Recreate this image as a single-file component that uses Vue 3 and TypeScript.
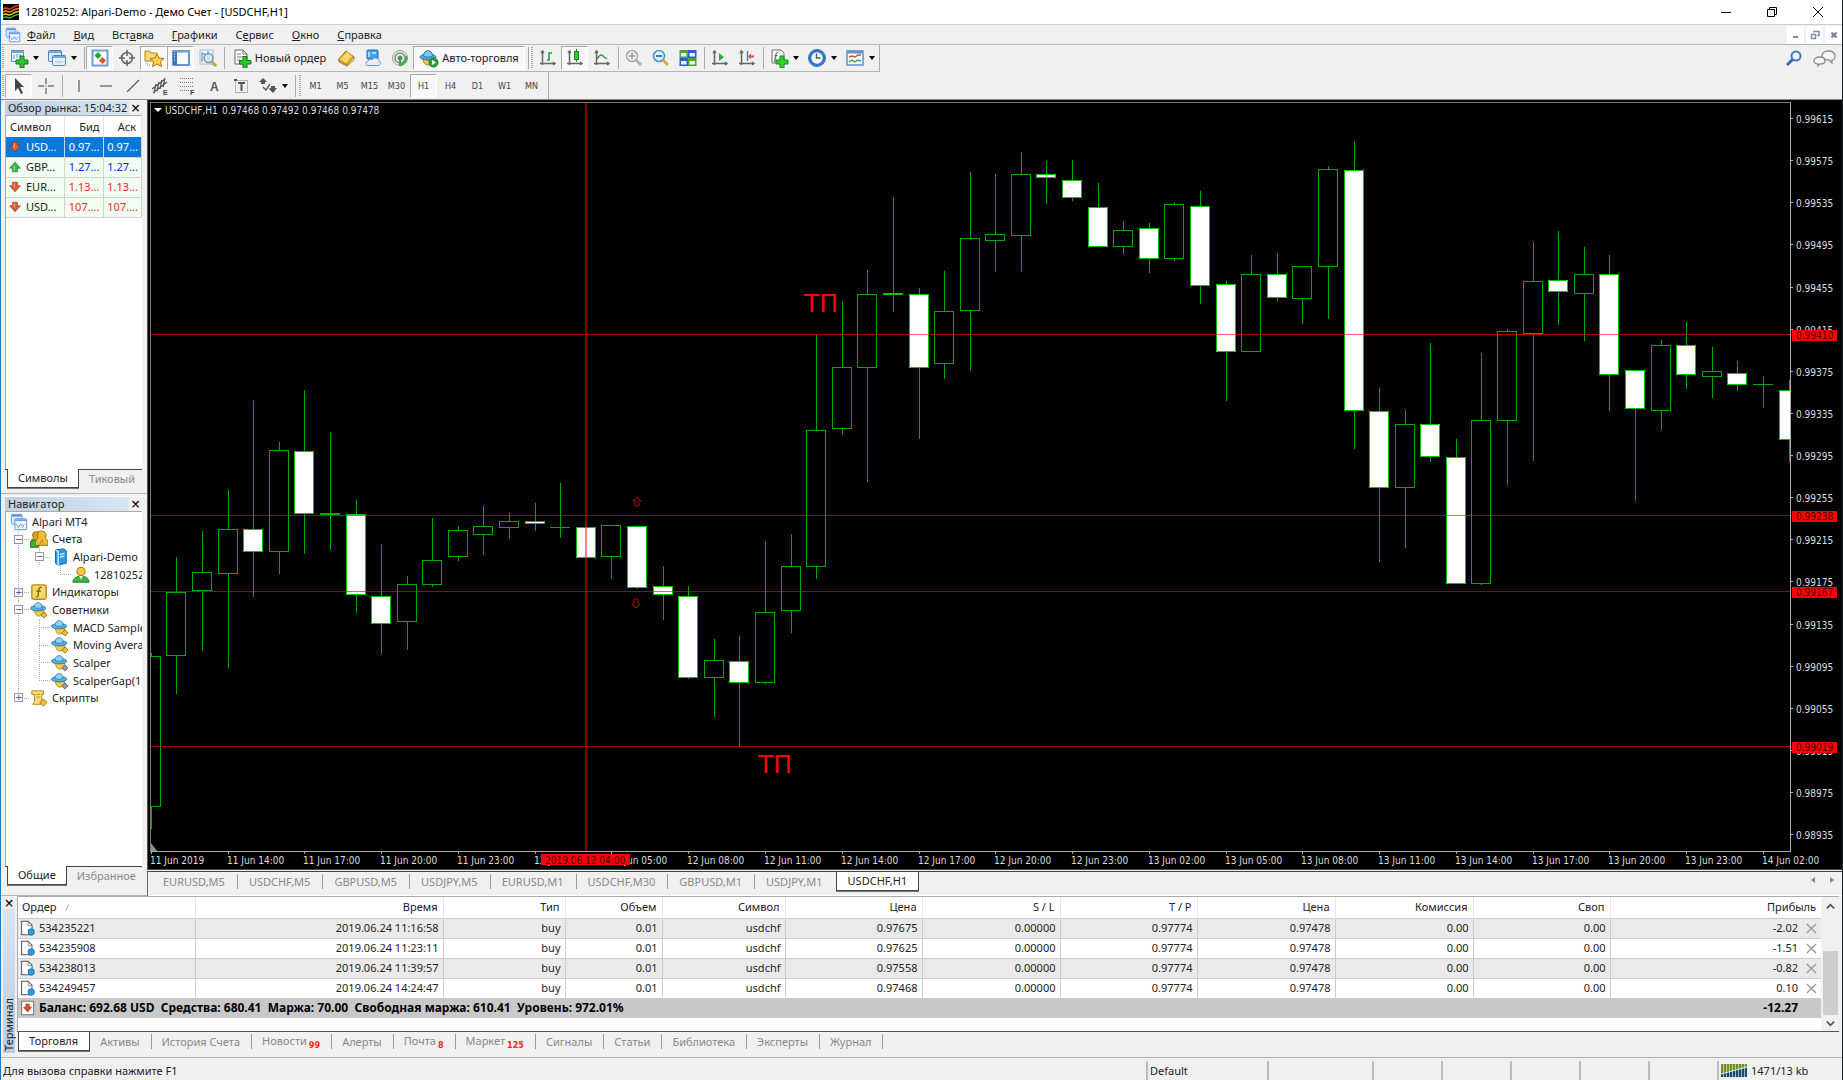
<script setup lang="ts">
interface Tool { icon?: string; text?: string; label?: string; kind?: 'sep' | 'grip'; arrow?: boolean; on?: boolean; wide?: string }

const icons: Record<string, string> = {
  newchart: '<rect x="2.5" y="2.5" width="12" height="11" fill="#e8f1fb" stroke="#5f8fc4"/><path d="M2 4h13" stroke="#7aa5d6" stroke-width="2"/><path d="M5 11V7M8 10V6M11 9V6" stroke="#6d98c8"/><path d="M11 8h4v4h4v4h-4v4h-4v-4H7v-4h4z" fill="#2fc42f" stroke="#0d7d14"/>',
  profiles: '<rect x="1.5" y="2.5" width="13" height="11" rx="1" fill="#dbe8f8" stroke="#4f81bd"/><path d="M2 4h12" stroke="#7ba6d9" stroke-width="2"/><rect x="5.500" y="7.500" width="13" height="10" rx="1" fill="#e8f1fb" stroke="#4f81bd"/><path d="M6 9h12" stroke="#7ba6d9" stroke-width="2"/><path d="M8 14h8" stroke="#9dbbe0"/>',
  market: '<rect x="2.500" y="2.500" width="15" height="15" fill="#fff" stroke="#6f9fd8" stroke-width="2"/><path d="M8 4l3.500 3.500L8 11 4.500 7.500z" fill="#1fa838"/><path d="M12.500 9l3.500 3.500-3.500 3.500L9 12.500z" fill="#e2552c"/>',
  target: '<g fill="none" stroke="#666" stroke-width="1.600"><circle cx="10" cy="10" r="5.500"/><path d="M10 2v6M10 12v6M2 10h6M12 10h6"/></g>',
  star: '<path d="M1 3h5l1 2h6v8H1z" fill="#f8d978" stroke="#b98a1f"/><path d="M3 13v4h4" fill="none" stroke="#888" stroke-dasharray="1 1"/><path d="M13 6l2 4 5 .6-3.500 3 1 5L13 16l-4.500 2.600 1-5-3.500-3 5-.6z" fill="#fbd045" stroke="#a8780f"/>',
  navpanel: '<rect x="2" y="3" width="16" height="14" fill="#f8fbff" stroke="#3c72b8" stroke-width="1.500"/><path d="M2 4h16" stroke="#7fabe0" stroke-width="1.500"/><rect x="2" y="4" width="4" height="13" fill="#3e74b8"/><path d="M3 6h1M3 9h1M3 12h1" stroke="#fff"/>',
  tester: '<rect x="2" y="2" width="13" height="14" fill="#f1f6fc" stroke="#9fb7d0"/><path d="M4 4v10M7 5v4M10 3v9M4 6h2" stroke="#4b89c8"/><circle cx="10.500" cy="10" r="4.500" fill="#cfe6f7" fill-opacity=".8" stroke="#7b98b3" stroke-width="1.500"/><path d="M14 14l4 4" stroke="#d5a021" stroke-width="3"/>',
  neworder: '<path d="M3 2h8l4 4v10H3z" fill="#fff" stroke="#666"/><path d="M11 2v4h4M5 6h4M5 9h6M5 12h3" fill="none" stroke="#777"/><path d="M11 8.500h4v4h4v3.500h-4v4h-4v-4H7.500v-3.500H11z" fill="#2fc42f" stroke="#0d7d14"/>',
  book: '<path d="M2 12L10 3l8 6-7 9z" fill="#e6ab28" stroke="#9c6c0e"/><path d="M4 11l7-7 5 4-6 7z" fill="#f8d666"/><path d="M3 13l8 4 7-8v3l-7 6-8-4z" fill="#fff3c8" stroke="#9c6c0e" stroke-width=".8"/>',
  vps: '<rect x="4" y="2" width="11" height="9" rx="1" fill="#40a4e8" stroke="#1e6fb5"/><path d="M6 4v5M9 5h4" stroke="#c9ecff" stroke-width="1.500"/><path d="M4 17.500h12a3 3 0 0 0 0-5 4 4 0 0 0-7-1 3 3 0 0 0-4 1.500 2.500 2.500 0 0 0-1 4.500z" fill="#e6eef8" stroke="#6d93c5"/>',
  radio: '<g fill="none"><circle cx="10" cy="10" r="7.500" stroke="#999"/><circle cx="10" cy="10" r="5" stroke="#888" stroke-width="1.500"/><path d="M10 17a7 7 0 0 0 6-9" stroke="#4fae54" stroke-width="2.500"/></g><circle cx="10" cy="10" r="2.500" fill="#4b9a55"/><path d="M10 10v8" stroke="#3fa34a" stroke-width="2"/>',
  auto: '<path d="M4 11c0 8 10 8 10 0z" fill="#f6cb4a" stroke="#a9821c"/><ellipse cx="9" cy="9" rx="8" ry="3" fill="#5aa9dc" stroke="#2a75ad"/><path d="M4.500 8c0-7 9-7 9 0-2 1.500-7 1.500-9 0z" fill="#83c8ec" stroke="#2a75ad"/><circle cx="14.500" cy="14.500" r="4.500" fill="#27a73a" stroke="#0f7420"/><path d="M13 12l4 2.500-4 2.500z" fill="#fff"/>',
  bars: '<path d="M4.500 3v14M2 15.500h15M3 5l1.500-2L6 5M15 14l2 1.500-2 1.500" fill="none" stroke="#666" stroke-width="1.500"/><path d="M9 12h2V5h3M11 5v7" fill="none" stroke="#2d9a3a" stroke-width="1.600"/>',
  candles: '<path d="M4.500 3v14M2 15.500h15M3 5l1.500-2L6 5M15 14l2 1.500-2 1.500" fill="none" stroke="#666" stroke-width="1.500"/><path d="M11.500 1v13" stroke="#16841f"/><rect x="9.500" y="3.500" width="4" height="8" fill="#2fc43a" stroke="#16841f"/>',
  linechart: '<path d="M4.500 3v14M2 15.500h15M3 5l1.500-2L6 5M15 14l2 1.500-2 1.500" fill="none" stroke="#666" stroke-width="1.500"/><path d="M5 11c3-5 5-5 7-2l3 2" fill="none" stroke="#3d9a4c" stroke-width="1.500"/>',
  zoomin: '<circle cx="8" cy="8" r="5.500" fill="#eee" stroke="#aaa" stroke-width="1.600"/><path d="M5 8h6M8 5v6" stroke="#999" stroke-width="1.600"/><path d="M12 12l5 5" stroke="#b5b5b5" stroke-width="3"/>',
  zoomout: '<circle cx="8" cy="8" r="5.500" fill="#d8effc" stroke="#4b94d0" stroke-width="1.600"/><path d="M5 8h6" stroke="#2c6fb0" stroke-width="1.800"/><path d="M12 12l5 5" stroke="#dcae33" stroke-width="3"/>',
  tiles: '<path d="M1.500 2H10v8H1.500z" fill="#4fa32b"/><path d="M10 2h8.500v8H10z" fill="#2b5fc8"/><path d="M1.500 10H10v8H1.500z" fill="#2b5fc8"/><path d="M10 10h8.500v8H10z" fill="#4fa32b"/><path d="M3 5h5.500v3.500H3zM11.500 5H17v3.500h-5.500zM3 13h5.500v3.500H3zM11.500 13H17v3.500h-5.500z" fill="#e9f4fb"/>',
  scroll: '<path d="M4.500 3v14M2 15.500h15M3 5l1.500-2L6 5M15 14l2 1.500-2 1.500" fill="none" stroke="#666" stroke-width="1.500"/><path d="M9 5l5 4-5 4z" fill="#25b038"/>',
  shift: '<path d="M4.500 3v14M2 15.500h15M3 5l1.500-2L6 5M15 14l2 1.500-2 1.500" fill="none" stroke="#666" stroke-width="1.500"/><path d="M10.500 3v10" stroke="#4782be" stroke-width="1.500"/><path d="M11 8.500l3-3v2h3v2h-3v2z" fill="#d85a2a"/>',
  indicators: '<path d="M3 2h9l3 3v10H3z" fill="#f8f8f8" stroke="#777"/><text x="5" y="12" font-family="Liberation Serif" font-size="11" font-style="italic" fill="#333">f</text><path d="M11 8h4v4h4v4h-4v4h-4v-4H7v-4h4z" fill="#2fd42f" stroke="#0d8d14"/>',
  clock: '<circle cx="10" cy="10" r="7" fill="#f4f8fc" stroke="#2a78d0" stroke-width="2.500"/><circle cx="10" cy="10" r="8.500" fill="none" stroke="#174f96" stroke-width=".8"/><path d="M9.500 5.500V10h4" fill="none" stroke="#555" stroke-width="1.300"/>',
  template: '<rect x="2" y="3" width="16" height="14" fill="#f5faff" stroke="#5d93cc" stroke-width="1.500"/><path d="M2 4h16" stroke="#5d93cc" stroke-width="3"/><path d="M4 9l3-1 3 1 3-2 3 0" fill="none" stroke="#c4552e" stroke-width="1.400"/><path d="M4 14l3-2 3 2 3-2 3 1" fill="none" stroke="#3ba24a" stroke-width="1.400"/>',
  cursor: '<path d="M6 2l9 9h-4l3 6-2 1-3-6-3 3z" fill="#444"/>',
  cross: '<path d="M10 2v6M10 12v6M2 10h6M12 10h6" stroke="#777" stroke-width="1.500"/><path d="M10 9.500v1" stroke="#777" stroke-width="1.500"/>',
  vline: '<path d="M10 4v12" stroke="#777" stroke-width="1.500"/>',
  hline: '<path d="M4 10h12" stroke="#777" stroke-width="1.500"/>',
  diag: '<path d="M4 16L16 4" stroke="#666" stroke-width="1.500"/>',
  channel: '<g stroke="#555" stroke-width="1.200" fill="none"><path d="M2 13L15 3M3 17L17 6M6 8l-2 9M9 6l-2 9M12 4l-2 9M15 2l-2 9"/></g><text x="13" y="19" font-family="Liberation Sans" font-weight="bold" font-size="7" fill="#444">E</text>',
  fibo: '<g stroke="#777" stroke-dasharray="1 1"><path d="M3 2.500h14M3 6.500h14M3 10.500h14M3 14.500h9"/></g><text x="13" y="19" font-family="Liberation Sans" font-weight="bold" font-size="7" fill="#444">F</text>',
  textA: '<text x="6" y="15" font-family="Liberation Sans" font-weight="bold" font-size="12" fill="#555">A</text>',
  textT: '<rect x="4.500" y="4.500" width="12" height="12" fill="none" stroke="#777" stroke-dasharray="1 1"/><path d="M7 7h7M10.500 7v8" stroke="#555" stroke-width="2"/><path d="M3 3h3v2H3z" fill="#555"/>',
  shapes: '<path d="M1 6l4-4 4 4H7v2H3V6z" fill="#555"/><path d="M5 11l3 3 4-6" fill="none" stroke="#666" stroke-width="1.500"/><path d="M10 13l3-1v-2h4v2h2l-4 5-4-4z" fill="#555"/>',
  down: '<path d="M6 2h8v6h5l-9 10L1 8h5z" fill="#e25a32" stroke="#8f2a10"/><path d="M8 4h2v7H8z" fill="#f6a58a"/>',
  up: '<path d="M6 18h8v-6h5L10 2 1 12h5z" fill="#35b54a" stroke="#146f24"/><path d="M8 16h2V7l-2 2z" fill="#9be0a6"/>',
  app: '<rect x="1.500" y="1.500" width="12" height="11" rx="1" fill="#dceafb" stroke="#5b94dc"/><path d="M2 3h11" stroke="#5b94dc" stroke-width="2"/><rect x="5.500" y="6.500" width="13" height="12" rx="1" fill="#f2f8ff" stroke="#4887d8"/><path d="M6 8h12" stroke="#6ba4e6" stroke-width="2"/><path d="M7 12l2 4 3-4 2 4 2-4" fill="none" stroke="#5b94dc"/>',
  people: '<path d="M1 19c-1-7 1-9 3-10-2-3-1-7 2-7h4v17z" fill="#d9a325" stroke="#92660f"/><path d="M0 19c0-7 2-8 5-8s4 3 4 8z" fill="#36b33a" stroke="#14731b"/><path d="M6 17c0-5 1-7 3-8-2-4 0-8 4-8s6 4 4 8c2 1 3 3 3 8z" fill="#f0bd3a" stroke="#92660f"/><path d="M13 10l-2 6M13 10l2 6" stroke="#b98a1f"/>',
  server: '<path d="M5 2l9-1 3 2v14l-9 2-3-2z" fill="#2d97e8" stroke="#145f9e"/><path d="M5 2l3 2v15M10 7l5-1M10 10l5-1" fill="none" stroke="#d4efff" stroke-width="1.500"/>',
  person: '<path d="M1 18c0-9 18-9 18 0z" fill="#3cba40" stroke="#14731b"/><path d="M8 11l2 4 2-4z" fill="#fff"/><circle cx="10" cy="6" r="4.500" fill="#f5c842" stroke="#92660f"/>',
  func: '<rect x="2" y="2" width="16" height="16" rx="2" fill="#f5d768" stroke="#b08a24" stroke-width="1.500"/><path d="M13 5c-4-1-3 3-4 9-.5 2-2 1-2 1M7 9h5" fill="none" stroke="#7a5b0d" stroke-width="1.400"/>',
  expert: '<path d="M5 10c0 9 10 9 10 0z" fill="#f6cb4a" stroke="#a9821c"/><ellipse cx="9" cy="8" rx="8.500" ry="3" fill="#5aafe0" stroke="#2a75ad"/><path d="M4.500 7c0-7 9-7 9 0-2 1.500-7 1.500-9 0z" fill="#8fd0f0" stroke="#2a75ad" stroke-width=".8"/><path d="M15.500 12l3.500 3.500-3.500 3.500-3.500-3.500z" fill="#edbd3a" stroke="#95700f"/>',
  expertoff: '<path d="M5 10c0 9 10 9 10 0z" fill="#f6cb4a" stroke="#a9821c"/><ellipse cx="9" cy="8" rx="8.500" ry="3" fill="#5aafe0" stroke="#2a75ad"/><path d="M4.500 7c0-7 9-7 9 0-2 1.500-7 1.500-9 0z" fill="#8fd0f0" stroke="#2a75ad" stroke-width=".8"/><path d="M15.500 12l3.500 3.500-3.500 3.500-3.500-3.500z" fill="#999" stroke="#666"/>',
  script: '<path d="M2 2h13v4h-2v11H3l2-3V6H2z" fill="#f7dc74" stroke="#a9821c"/><path d="M7 6h4M7 9h4" stroke="#a9821c"/><path d="M15 11l4 4-4 4-4-4z" fill="#edbd3a" stroke="#95700f"/>',
  order: '<path d="M2 1.500h8l5 5v12H2z" fill="#fff" stroke="#555" stroke-width="1.300"/><path d="M10 2v5h5" fill="none" stroke="#777"/><circle cx="14" cy="15" r="4" fill="#2c9fe0" stroke="#1668a5"/>',
  balance: '<path d="M2 1.500h15v17H2z" fill="#fff" stroke="#777" stroke-width="1.300"/><path d="M7.500 5h4v4h3l-5 6-5-6h3z" fill="#dc4f28" stroke="#8f2a10" stroke-width=".8"/>',
}

const bar1: Tool[] = [
  { kind: 'grip' }, { icon: 'newchart', label: 'Новый график', arrow: true }, { icon: 'profiles', label: 'Профили', arrow: true }, { kind: 'sep' },
  { icon: 'market', label: 'Обзор рынка', on: true }, { icon: 'target', label: 'Окно данных' }, { icon: 'star', label: 'Навигатор', on: true },
  { icon: 'navpanel', label: 'Терминал', on: true }, { icon: 'tester', label: 'Тестер стратегий' }, { kind: 'sep' },
  { icon: 'neworder', text: 'Новый ордер', wide: 'order' }, { icon: 'book', label: 'MetaEditor' }, { icon: 'vps', label: 'Виртуальный хостинг' }, { icon: 'radio', label: 'Сигналы' },
  { icon: 'auto', text: 'Авто-торговля', on: true, wide: 'auto' }, { kind: 'sep' }, { kind: 'grip' },
  { icon: 'bars', label: 'Бары' }, { icon: 'candles', label: 'Свечи', on: true }, { icon: 'linechart', label: 'Линия' }, { kind: 'sep' },
  { icon: 'zoomin', label: 'Увеличить' }, { icon: 'zoomout', label: 'Уменьшить' }, { icon: 'tiles', label: 'Мозаика' }, { kind: 'sep' },
  { icon: 'scroll', label: 'Автопрокрутка' }, { icon: 'shift', label: 'Сдвиг графика' }, { kind: 'sep' },
  { icon: 'indicators', label: 'Индикаторы', arrow: true }, { icon: 'clock', label: 'Периоды', arrow: true }, { icon: 'template', label: 'Шаблоны', arrow: true },
]
const bar2: Tool[] = [
  { kind: 'grip' }, { icon: 'cursor', label: 'Курсор', on: true }, { icon: 'cross', label: 'Перекрестие' }, { kind: 'sep' },
  { icon: 'vline', label: 'Вертикальная линия' }, { icon: 'hline', label: 'Горизонтальная линия' }, { icon: 'diag', label: 'Трендовая линия' },
  { icon: 'channel', label: 'Канал' }, { icon: 'fibo', label: 'Фибоначчи' }, { icon: 'textA', label: 'Текст' }, { icon: 'textT', label: 'Метка' },
  { icon: 'shapes', label: 'Стрелки', arrow: true }, { kind: 'sep' }, { kind: 'grip' },
  ...['M1', 'M5', 'M15', 'M30', 'H1', 'H4', 'D1', 'W1', 'MN'].map((t) => ({ text: t, on: t === 'H1' })),
]
const menu = [['', 'Ф', 'айл'], ['', 'В', 'ид'], ['Вст', 'а', 'вка'], ['', 'Г', 'рафики'], ['С', 'е', 'рвис'], ['', 'О', 'кно'], ['', 'С', 'правка']]

const quotes = [
  { s: 'USD...', b: '0.97...', a: '0.97...', dir: 'down', cls: 'sel' },
  { s: 'GBP...', b: '1.27...', a: '1.27...', dir: 'up', cls: 'gain' },
  { s: 'EUR...', b: '1.13...', a: '1.13...', dir: 'down', cls: 'loss' },
  { s: 'USD...', b: '107....', a: '107....', dir: 'down', cls: 'loss' },
]
const tree = [
  { d: 0, icon: 'app', t: 'Alpari MT4' },
  { d: 1, box: '−', icon: 'people', t: 'Счета' },
  { d: 2, box: '−', icon: 'server', t: 'Alpari-Demo' },
  { d: 3, icon: 'person', t: '12810252' },
  { d: 1, box: '+', icon: 'func', t: 'Индикаторы' },
  { d: 1, box: '−', icon: 'expert', t: 'Советники' },
  { d: 2, icon: 'expert', t: 'MACD Sample' },
  { d: 2, icon: 'expert', t: 'Moving Average' },
  { d: 2, icon: 'expertoff', t: 'Scalper' },
  { d: 2, icon: 'expertoff', t: 'ScalperGap(1)' },
  { d: 1, box: '+', icon: 'script', t: 'Скрипты' },
]

// Each bar: high, body top, body bottom, low, falling flag
const raw: number[][] = [
  [653, 656, 806, 829, 0], [557, 592, 655, 694, 0], [531, 572, 590, 651, 0], [490, 529, 573, 668, 0], [401, 529, 551, 597, 1],
  [442, 450, 551, 574, 0], [390, 451, 513, 554, 1], [433, 513, 514, 550, 0], [500, 514, 594, 613, 1], [545, 596, 623, 654, 1],
  [576, 584, 621, 650, 0], [518, 560, 584, 587, 0], [526, 530, 556, 561, 0], [506, 526, 534, 555, 0], [513, 521, 527, 539, 0],
  [503, 521, 523, 531, 1], [483, 527, 527, 538, 0], [527, 527, 557, 557, 1], [525, 525, 556, 579, 0], [526, 526, 587, 589, 1],
  [566, 586, 594, 620, 1], [586, 596, 677, 679, 1], [639, 660, 677, 717, 0], [636, 661, 682, 747, 1], [541, 612, 682, 684, 0],
  [534, 566, 610, 633, 0], [335, 430, 566, 579, 0], [301, 367, 428, 435, 0], [270, 294, 367, 482, 0], [197, 293, 294, 312, 1],
  [288, 294, 367, 439, 1], [271, 311, 363, 379, 0], [172, 238, 310, 371, 0], [174, 234, 240, 272, 0], [152, 174, 235, 271, 0],
  [161, 174, 177, 204, 1], [160, 180, 197, 201, 1], [183, 207, 246, 247, 1], [221, 230, 246, 254, 0], [223, 228, 258, 273, 1],
  [202, 204, 258, 261, 0], [191, 206, 285, 304, 1], [281, 284, 351, 401, 1], [255, 274, 351, 351, 0], [253, 274, 297, 301, 1],
  [266, 266, 298, 324, 0], [166, 169, 266, 319, 0], [141, 170, 410, 449, 1], [388, 411, 487, 562, 1], [410, 424, 487, 548, 0],
  [343, 424, 456, 462, 1], [439, 457, 583, 583, 1], [353, 420, 583, 585, 0], [329, 331, 420, 485, 0], [242, 281, 333, 461, 0],
  [231, 280, 291, 325, 1], [247, 274, 293, 341, 0], [255, 274, 374, 411, 1], [370, 370, 408, 501, 1], [340, 345, 410, 430, 0],
  [322, 345, 374, 389, 1], [347, 371, 376, 398, 0], [361, 373, 384, 391, 1], [376, 384, 384, 408, 0], [380, 390, 439, 462, 1],
]
const step = 25.59
const barX = (i: number) => Math.floor(i * step + 0.3)
const top = 103
const candles = raw.map(([h, t, b, l, f], i) => ({ x: barX(i), h: h - top, t: t - top, b: b - top, l: l - top, f: !!f }))
const levels = [
  { y: 334, p: '0.99410' }, { y: 515, p: '0.99238' }, { y: 591, p: '0.99167' }, { y: 746, p: '0.99019' },
].map((v) => ({ ...v, y: v.y - top }))
const prices = Array.from({ length: 18 }, (_, i) => ({ y: Math.round(17 + i * 42.13), p: (0.99615 - i * 0.0004).toFixed(5) }))
const times = Array.from({ length: 22 }, (_, i) => {
  const hour = 11 + i * 3
  const day = 11 + Math.floor(hour / 24)
  return { x: barX(i * 3), t: i === 0 ? '11 Jun 2019' : `${day} Jun ${String(hour % 24).padStart(2, '0')}:00` }
})
const chartTabs = ['EURUSD,M5', 'USDCHF,M5', 'GBPUSD,M5', 'USDJPY,M5', 'EURUSD,M1', 'USDCHF,M30', 'GBPUSD,M1', 'USDJPY,M1', 'USDCHF,H1']
const cols = ['Ордер', 'Время', 'Тип', 'Объем', 'Символ', 'Цена', 'S / L', 'T / P', 'Цена', 'Комиссия', 'Своп', 'Прибыль']
const orders = [
  ['534235221', '2019.06.24 11:16:58', '0.97675', '-2.02'],
  ['534235908', '2019.06.24 11:23:11', '0.97625', '-1.51'],
  ['534238013', '2019.06.24 11:39:57', '0.97558', '-0.82'],
  ['534249457', '2019.06.24 14:24:47', '0.97468', '0.10'],
].map(([id, time, price, profit]) => ({ id, profit, cells: [time, 'buy', '0.01', 'usdchf', price, '0.00000', '0.97774', '0.97478', '0.00', '0.00'] }))
const termTabs = [
  { t: 'Торговля' }, { t: 'Активы' }, { t: 'История Счета' }, { t: 'Новости', n: '99' }, { t: 'Алерты' }, { t: 'Почта', n: '8' }, { t: 'Маркет', n: '125' },
  { t: 'Сигналы' }, { t: 'Статьи' }, { t: 'Библиотека' }, { t: 'Эксперты' }, { t: 'Журнал' },
]
</script>

<template>
  <div class="win">
    <header class="title">
      <svg class="logo" viewBox="0 0 16 16"><rect width="16" height="16" fill="#000" /><g fill="none" stroke-width="1.500"><path d="M0 5c4-3 5 2 9-1s4-1 7-3" stroke="#e33" /><path d="M0 8c4-3 5 2 9-1s4-1 7-3" stroke="#f80" /><path d="M0 11c4-3 5 2 9-1s4-1 7-3" stroke="#dd2" /><path d="M0 14c4-3 5 2 9-1s4-1 7-3" stroke="#3b3" /></g></svg>
      <h1>12810252: Alpari-Demo - Демо Счет - [USDCHF,H1]</h1>
      <div class="winbtns">
        <button aria-label="Свернуть"><svg viewBox="0 0 12 12"><path d="M1 6.500h10" stroke="#000" /></svg></button>
        <button aria-label="Восстановить"><svg viewBox="0 0 12 12"><path d="M1.500 3.500h7v7h-7zM3.500 3.500v-2h7v7h-2" fill="none" stroke="#000" /></svg></button>
        <button aria-label="Закрыть"><svg viewBox="0 0 12 12"><path d="M1 1l10 10M11 1L1 11" stroke="#000" /></svg></button>
      </div>
    </header>

    <nav class="menu">
      <svg class="ic16" viewBox="0 0 20 20" v-html="icons.app"></svg>
      <button v-for="m in menu" :key="m.join('')">{{ m[0] }}<u>{{ m[1] }}</u>{{ m[2] }}</button>
      <div class="mdi">
        <button aria-label="Свернуть график"><svg viewBox="0 0 12 12"><path d="M3 8h5" stroke="#7d8fa5" stroke-width="2" /></svg></button>
        <button aria-label="Восстановить график"><svg viewBox="0 0 12 12"><path d="M2.500 5.500h4v4h-4zM2 5.500h5M5 3.500V2.500h5v4H8" fill="none" stroke="#7d8fa5" stroke-width="1.500" /></svg></button>
        <button aria-label="Закрыть график"><svg viewBox="0 0 12 12"><path d="M3.500 3.500l5 5M8.500 3.500l-5 5" stroke="#6d8096" stroke-width="2" /></svg></button>
      </div>
    </nav>

    <div class="bars">
      <div v-for="(bar, bi) in [bar1, bar2]" :key="bi" class="bar">
        <div class="tools" :class="{ second: bi === 1 }">
          <template v-for="(t, i) in bar" :key="i">
            <span v-if="t.kind" :class="t.kind"></span>
            <button v-else class="tool" :class="[t.wide, { on: t.on, drop: t.arrow, tf: !t.icon }]" :aria-label="t.label">
              <svg v-if="t.icon" class="ic" viewBox="0 0 20 20" v-html="icons[t.icon]"></svg>
              <span v-if="t.text">{{ t.text }}</span>
              <i v-if="t.arrow" class="caret"></i>
            </button>
          </template>
        </div>
        <div v-if="bi === 0" class="right">
          <button aria-label="Поиск"><svg class="ic" viewBox="0 0 20 20"><circle cx="12" cy="7" r="4.500" fill="#eef4ff" stroke="#4a78cf" stroke-width="2" /><path d="M9 10l-6 6" stroke="#3a66bd" stroke-width="3" /></svg></button>
          <button aria-label="Сообщения"><svg class="chat" viewBox="0 0 24 20"><g fill="#f4f4f8" stroke="#8d8d94" stroke-width="1.300"><path d="M15 2c5 0 7 2 7 5s-2 4-3 4v3l-3-3c-5 0-7-2-7-4 0-3 2-5 6-5z" /><path d="M7 8c4 0 5 2 5 4s-2 3-5 3l-2 2v-2c-3 0-4-2-4-3 0-2 2-4 6-4z" /></g></svg></button>
        </div>
      </div>
    </div>

    <main class="mid">
      <aside class="side">
        <section class="dock watch">
          <h2><span>Обзор рынка: 15:04:32</span><button aria-label="Закрыть обзор рынка">×</button></h2>
          <div class="body">
            <table class="quotes">
              <thead><tr><th>Символ</th><th>Бид</th><th>Аск</th></tr></thead>
              <tbody>
                <tr v-for="(q, i) in quotes" :key="i" :class="q.cls">
                  <td><div class="sym"><svg class="ic12" viewBox="0 0 20 20" v-html="icons[q.dir]"></svg>{{ q.s }}</div></td><td>{{ q.b }}</td><td>{{ q.a }}</td>
                </tr>
              </tbody>
            </table>
          </div>
          <div class="tabs"><button class="act">Символы</button><button>Тиковый</button></div>
        </section>
        <section class="dock nav">
          <h2><span>Навигатор</span><button aria-label="Закрыть навигатор">×</button></h2>
          <div class="body">
            <ul class="tree">
              <li v-for="(n, i) in tree" :key="i" :class="'d' + n.d">
                <span v-if="n.d" class="stem"><b v-if="n.box">{{ n.box }}</b></span>
                <svg class="ic18" viewBox="0 0 20 20" v-html="icons[n.icon]"></svg><span>{{ n.t }}</span>
              </li>
            </ul>
          </div>
          <div class="tabs"><button class="act">Общие</button><button>Избранное</button></div>
        </section>
      </aside>

      <section class="work">
        <div class="chart">
          <svg class="plot" role="img" aria-label="USDCHF,H1">
            <g v-for="(c, i) in candles" :key="i" shape-rendering="crispEdges">
              <rect class="wick" :x="c.x" :y="c.h" width="1" :height="c.l - c.h" />
              <rect v-if="c.b > c.t" :class="c.f ? 'fall' : 'rise'" :x="c.x - 9.500" :y="c.t + .5" width="19" :height="c.b - c.t" />
              <rect v-else class="wick" :x="c.x - 10" :y="c.t" width="20" height="1" />
            </g>
            <rect v-for="l in levels" :key="l.p" class="level" x="0" :y="l.y" width="100%" height="1" />
            <rect class="vert" x="434" y="0" width="2" height="100%" />
            <path class="mark" d="M486 394l4 4h-2v5h-4v-5h-2z" /><path class="mark" d="M485 505l-4-4h2v-5h4v5h2z" />
            <text class="tp" x="653" y="209">ТП</text><text class="tp" x="607" y="670">ТП</text>
            <path d="M3 5h8l-4 4z" fill="#fff" />
            <text class="lbl" x="14" y="11">USDCHF,H1</text><text class="lbl" x="71" y="11">0.97468 0.97492 0.97468 0.97478</text>
            <path class="corner" d="M0 740v8h6z" />
          </svg>
          <svg class="paxis">
            <g v-for="p in prices" :key="p.p"><rect x="0" :y="p.y - 1" width="2" height="1" fill="#aaa" /><text class="lbl" x="5" :y="p.y + 4">{{ p.p }}</text></g>
            <g v-for="l in levels" :key="l.p"><rect x="1" :y="l.y - 3" width="45" height="11" fill="#f00" /><text class="hot" x="5" :y="l.y + 6">{{ l.p }}</text></g>
          </svg>
          <svg class="taxis">
            <g v-for="t in times" :key="t.t"><rect :x="t.x" y="0" width="1" height="2" fill="#aaa" /><text class="lbl" :x="t.x - 1" y="12">{{ t.t }}</text></g>
            <rect x="390" y="2" width="89" height="11" fill="#f00" /><text class="hot" x="394" y="12">2019.06.12 04:00</text>
          </svg>
        </div>
        <div class="ctabs">
          <button v-for="t in chartTabs" :key="t" :class="{ act: t === 'USDCHF,H1' }">{{ t }}</button>
          <span class="arrows"><i class="al"></i><i class="ar"></i></span>
        </div>
      </section>
    </main>

    <section class="term">
      <div class="strip"><button aria-label="Закрыть терминал">×</button><span>Терминал</span></div>
      <div class="tbody">
        <div class="grid">
          <table class="orders">
            <colgroup><col v-for="(c, i) in cols" :key="i" :class="'c' + i" /></colgroup>
            <thead><tr><th v-for="(c, i) in cols" :key="i">{{ c }}<i v-if="i === 0" class="sort">∕</i></th></tr></thead>
            <tbody>
              <tr v-for="o in orders" :key="o.id">
                <td><div class="sym"><svg class="ic16" viewBox="0 0 20 20" v-html="icons.order"></svg>{{ o.id }}</div></td>
                <td v-for="(c, i) in o.cells" :key="i">{{ c }}</td>
                <td><div class="profit">{{ o.profit }}<button aria-label="Закрыть ордер"><svg viewBox="0 0 12 12"><path d="M1 1l10 10M11 1L1 11" stroke="#999" stroke-width="1.500" /></svg></button></div></td>
              </tr>
            </tbody>
            <tfoot>
              <tr>
                <td colspan="11"><div class="sym"><svg class="ic16" viewBox="0 0 20 20" v-html="icons.balance"></svg>Баланс: 692.68 USD&nbsp; Средства: 680.41&nbsp; Маржа: 70.00&nbsp; Свободная маржа: 610.41&nbsp; Уровень: 972.01%</div></td>
                <td><div class="profit total">-12.27</div></td>
              </tr>
            </tfoot>
          </table>
          <div class="scroll"><svg viewBox="0 0 10 10"><path d="M1 7l4-4 4 4" /></svg><i></i><svg viewBox="0 0 10 10"><path d="M1 3l4 4 4-4" /></svg></div>
        </div>
        <div class="ttabs"><button v-for="(t, i) in termTabs" :key="t.t" :class="{ act: i === 0 }">{{ t.t }}<sub v-if="t.n">{{ t.n }}</sub></button></div>
      </div>
    </section>

    <footer class="status">
      <span class="help">Для вызова справки нажмите F1</span>
      <span class="s1">Default</span><span class="s2"></span><span class="s3"></span><span class="s3"></span><span class="s3"></span><span class="s3"></span><span class="s3"></span>
      <span class="net"><svg viewBox="0 0 26 13"><rect width="26" height="13" fill="#6f8d18" /><path d="M0 13v-3L26 3v10z" fill="#154a72" /><path d="M0 10L26 3" stroke="#e8eef0" /><path d="M2.500 0v13M5.500 0v13M8.500 0v13M11.500 0v13M14.500 0v13M17.500 0v13M20.500 0v13M23.500 0v13" stroke="#dfe5e0" stroke-width=".7" /></svg>1471/13 kb</span>
    </footer>
  </div>
</template>

<style>
body { margin: 0; background: #f0f0f0; }
</style>

<style scoped>
.win { display: flex; flex-direction: column; min-height: 100vh; box-sizing: border-box; border-left: 1px solid #1979ca; border-right: 1px solid #17222e; background: #f0f0f0; color: #222; font: 11px/16px "Noto Sans", "Open Sans", sans-serif; overflow: hidden; }
.win * { box-sizing: border-box; }
button { font: inherit; color: inherit; background: none; border: 0; padding: 0; margin: 0; }
h1, h2 { margin: 0; font: inherit; }
svg { display: block; flex: none; }
.ic { width: 20px; height: 20px; }
.ic18 { width: 18px; height: 18px; }
.ic16 { width: 16px; height: 16px; }
.ic12 { width: 12px; height: 12px; }

.title { display: flex; align-items: center; height: 24px; background: #fff; color: #000; padding: 0 1px 0 2px; }
.logo { width: 16px; height: 16px; }
.title h1 { margin-left: 6px; }
.winbtns { margin-left: auto; display: flex; }
.winbtns button { width: 46px; height: 24px; display: grid; place-items: center; }
.winbtns svg { width: 12px; height: 12px; }

.menu { display: flex; align-items: center; height: 21px; border-top: 1px solid #ccc; border-bottom: 1px solid #b4b4b4; padding-left: 4px; }
.menu > button { padding: 0 9px; height: 18px; }
.menu > .ic16 { margin-right: -3px; }
.mdi { margin-left: auto; display: flex; gap: 2px; }
.mdi button { width: 17px; height: 18px; background: #fff; display: grid; place-items: center; }
.mdi svg { width: 12px; height: 12px; }

.bars { border-bottom: 1px solid #888; }
.bar { display: flex; justify-content: space-between; height: 27px; }
.tools { display: flex; align-items: center; border-right: 1px solid #aaa; border-bottom: 1px solid #b4b4b4; }
.tools.second { border-bottom: 0; padding-right: 3px; }
.tool { width: 27px; height: 24px; display: flex; align-items: center; justify-content: center; border: 1px solid transparent; }
.tool.on { background: #f8f8f8; border-color: #aaa #fff #fff #aaa; }
.tool.drop { width: 38px; gap: 4px; }
.tool.order { width: 106px; gap: 3px; }
.tool.auto { width: 112px; gap: 3px; }
.tool.tf { font: 9px/16px "DejaVu Sans Condensed", "DejaVu Sans", sans-serif; color: #444; }
.caret { border: 3px solid transparent; border-top: 4px solid #000; border-bottom: 0; }
.sep { width: 4px; height: 22px; border-right: 1px solid #aaa; margin-right: 1px; }
.second .sep { margin-right: 2px; }
.grip { width: 4px; height: 22px; background: repeating-linear-gradient(#aaa 0 1px, #f0f0f0 1px 2px); border-left: 1px solid #f0f0f0; border-right: 1px solid #f0f0f0; }
.right { display: flex; align-items: center; gap: 9px; padding-right: 5px; }
.chat { width: 24px; height: 20px; }

.mid { flex: 1; display: flex; min-height: 0; }
.side { width: 146px; flex: none; display: flex; flex-direction: column; padding: 1px 5px 0 4px; border-bottom: 1px solid #b4b4b4; }
.dock { display: flex; flex-direction: column; min-height: 0; }
.watch { height: 392px; }
.nav { flex: 1; margin-top: 4px; padding-bottom: 5px; position: relative; }
.nav::before { content: ""; position: absolute; left: -4px; right: -5px; top: -4px; height: 2px; border-top: 1px solid #b4b4b4; border-bottom: 1px solid #fff; }
.dock h2 { display: flex; height: 14px; line-height: 14px; align-items: center; justify-content: space-between; }
.dock h2 span { flex: 1; padding-left: 3px; background: linear-gradient(90deg, #bfcfdf, #d8e6f4); white-space: nowrap; overflow: hidden; }
.dock h2 button, .strip button { width: 13px; line-height: 12px; font-size: 16px; color: #000; text-align: center; }
.body { flex: 1; background: #fff; border: 1px solid #aaa; border-width: 1px 0 0 1px; overflow: hidden; }
.tabs { display: flex; height: 24px; padding-left: 2px; overflow: hidden; background: linear-gradient(#444 0 1px, transparent 1px); align-items: flex-start; }
.tabs button { height: 19px; padding: 0 10px; color: #888; white-space: nowrap; }
.tabs .act { background: #fff; color: #222; border: 1px solid #444; border-top: 0; box-shadow: 0 1px #777; }

table { border-collapse: collapse; table-layout: fixed; }
th { font-weight: normal; }
.quotes { width: 136px; }
.quotes th { height: 21px; padding: 0 5px 0 0; text-align: right; border-right: 1px solid #e4e4e4; }
.quotes th:first-child { width: 58px; text-align: left; padding-left: 4px; }
.quotes th:nth-child(2) { width: 39px; padding-right: 3px; }
.quotes td { height: 20px; padding: 0 3px 0 0; text-align: right; background: #f1fdf0; border-right: 1px solid #d2d2d2; border-bottom: 1px solid #d2d2d2; }
.sym { display: flex; align-items: center; }
.quotes .sym { gap: 5px; padding-left: 3px; }
.quotes .sel td { background: #0a78d7; color: #fff; }
.gain td:nth-child(n+2) { color: #1a1aff; }
.loss td:nth-child(n+2) { color: #f22; }

.tree { list-style: none; margin: 0; padding: 1px 0 0; height: 195px; display: grid; grid-auto-rows: minmax(0, 1fr); }
.tree li { display: flex; align-items: center; position: relative; white-space: nowrap; min-height: 0; }
.d0 { padding-left: 4px; }
.d1 { padding-left: 7px; }
.d2 { padding-left: 28px; }
.d3 { padding-left: 49px; }
.stem { width: 17px; height: 100%; position: relative; background: repeating-linear-gradient(90deg, #aaa 0 1px, transparent 1px 2px) 5px 50% / 11px 1px no-repeat; }
.stem b { position: absolute; z-index: 1; left: 1px; top: 4px; width: 9px; height: 9px; border: 1px solid #999; background: #fff; font: 9px/7px "DejaVu Sans", sans-serif; text-align: center; color: #2a4a9a; }
.tree li::before { content: ""; position: absolute; left: 12px; top: 0; bottom: 0; width: 1px; background: repeating-linear-gradient(#aaa 0 1px, transparent 1px 2px); }
.tree li.d0::before { top: 16px; }
.tree li:last-child::before { bottom: 9px; }
.tree li.d2::after, .tree li.d3::after { content: ""; position: absolute; left: 33px; top: 0; bottom: 0; width: 1px; background: repeating-linear-gradient(#aaa 0 1px, transparent 1px 2px); }
.tree li.d3::after { left: 54px; bottom: 8px; }
.tree li:nth-last-child(2)::after { bottom: 8px; }
.tree .ic18 { margin-right: 4px; }

.work { flex: 1; min-width: 0; display: flex; flex-direction: column; }
.chart { flex: 1; display: grid; grid-template-columns: minmax(0, 1fr) 51px; grid-template-rows: minmax(0, 1fr) 17px; background: #000; padding: 2px 0 0 2px; border-left: 1px solid #555; border-bottom: 1px solid #444; overflow: hidden; }
.plot { width: 100%; height: 100%; border: 1px solid #aaa; border-top-color: #777; border-left-color: #777; }
.paxis { width: 51px; height: 100%; }
.taxis { width: 100%; height: 17px; grid-column: 1 / 3; padding-left: 1px; }
.wick { fill: #00aa00; }
.rise { fill: #000; stroke: #00aa00; }
.fall { fill: #fff; stroke: #00c800; }
.level { fill: #f00; fill-opacity: .65; }
.vert { fill: #f00; fill-opacity: .5; }
.mark { fill: none; stroke: #a00; }
.corner { fill: #8494a8; }
.tp { font: 25px "DejaVu Sans", sans-serif; fill: #f00; }
.lbl, .hot { font: 10px "DejaVu Sans Condensed", "DejaVu Sans", sans-serif; fill: #ddd; }
.hot { fill: #400; }
.ctabs { display: flex; align-items: flex-start; height: 25px; margin-top: 1px; border-top: 1px solid #444; border-left: 1px solid #666; padding-left: 4px; box-shadow: inset 0 -1px #fff; }
.ctabs button, .ttabs button { position: relative; color: #888; height: 19px; border-right: 1px solid transparent; white-space: nowrap; }
.ctabs button { padding: 0 12px 0 11px; }
.ttabs button { padding: 0 11px 0 10px; }
.ctabs button:not(.act)::after, .ttabs button:not(.act)::after { content: ""; position: absolute; right: -1px; top: 2px; bottom: 2px; width: 1px; background: #999; }
.ctabs button:nth-last-child(3)::after { display: none; }
.ctabs button.act, .ttabs button.act { background: #fff; color: #222; border: 1px solid #444; border-top: 0; box-shadow: 0 1px #777; }
.ctabs button.act { padding: 0 11px; }
.arrows { margin-left: auto; display: flex; gap: 15px; padding: 5px 8px; }
.arrows i { border: 3px solid transparent; }
.arrows .al { border-right: 4px solid #888; border-left: 0; }
.arrows .ar { border-left: 4px solid #888; border-right: 0; }

.term { display: flex; height: 161px; padding: 0 3px 0 2px; }
.strip { width: 12px; margin-right: 2px; display: flex; flex-direction: column; padding: 1px 0 4px; }
.strip button { width: 12px; height: 12px; }
.strip span { flex: 1; writing-mode: vertical-rl; transform: rotate(180deg); background: linear-gradient(#b8cbdf, #d8e6f4); line-height: 12px; padding-top: 2px; }
.tbody { flex: 1; min-width: 0; display: flex; flex-direction: column; }
.grid { display: flex; height: 136px; background: #fff; border: 1px solid #aaa; border-bottom-color: #555; border-right: 0; align-items: flex-start; }
.orders { flex: 1; min-width: 0; width: 100%; }
.orders th { height: 21px; padding: 0 5px; text-align: right; border-right: 1px solid #e6e6e6; }
.orders th:first-child { text-align: left; padding-left: 4px; }
.orders th:last-child, .orders td:last-child { border-right: 0; }
.orders td { height: 20px; padding: 0 4px; text-align: right; border-right: 1px solid #ccc; border-top: 1px solid #ccc; }
.orders td:first-child { padding: 0 0 0 2px; }
.orders tbody tr:nth-child(odd) td { background: #eaeaea; }
.orders .sym { gap: 3px; }
.orders tfoot td { background: #c8c8c8; border-color: #c8c8c8; font-weight: bold; font-size: 12px; color: #000; white-space: nowrap; }
.c0 { width: 177px; } .c1 { width: 248px; } .c2 { width: 122px; } .c3 { width: 97px; } .c4 { width: 123px; }
.c5, .c7, .c10 { width: 137px; } .c6, .c8, .c9 { width: 138px; }
.sort { font-size: 9px; color: #888; margin-left: 9px; font-style: normal; }
.profit { display: flex; justify-content: flex-end; align-items: center; gap: 8px; }
.profit svg { width: 11px; height: 11px; }
.total { padding-right: 19px; }
.scroll { width: 18px; align-self: stretch; background: #f0f0f0; display: flex; flex-direction: column; align-items: center; padding: 5px 0 3px; }
.scroll svg { width: 9px; height: 9px; fill: none; stroke: #555; stroke-width: 2; }
.scroll i { margin: auto 0 4px; width: 15px; height: 64px; background: #cdcdcd; }
.ttabs { display: flex; padding-left: 1px; }
sub { font: bold 9px/9px "DejaVu Sans Condensed", sans-serif; color: #f22; margin-left: 2px; vertical-align: -3px; }

.status { display: flex; height: 23px; border-top: 1px solid #b4b4b4; padding-top: 3px; line-height: 19px; }
.status > span { border-left: 2px solid #bbb; padding-left: 2px; }
.status .help { flex: 1; border: 0; }
.s1 { width: 121px; } .s2 { width: 105px; } .s3 { width: 69px; }
.status .net { width: 125px; display: flex; align-items: center; gap: 4px; }
.net svg { width: 26px; height: 13px; }
</style>
